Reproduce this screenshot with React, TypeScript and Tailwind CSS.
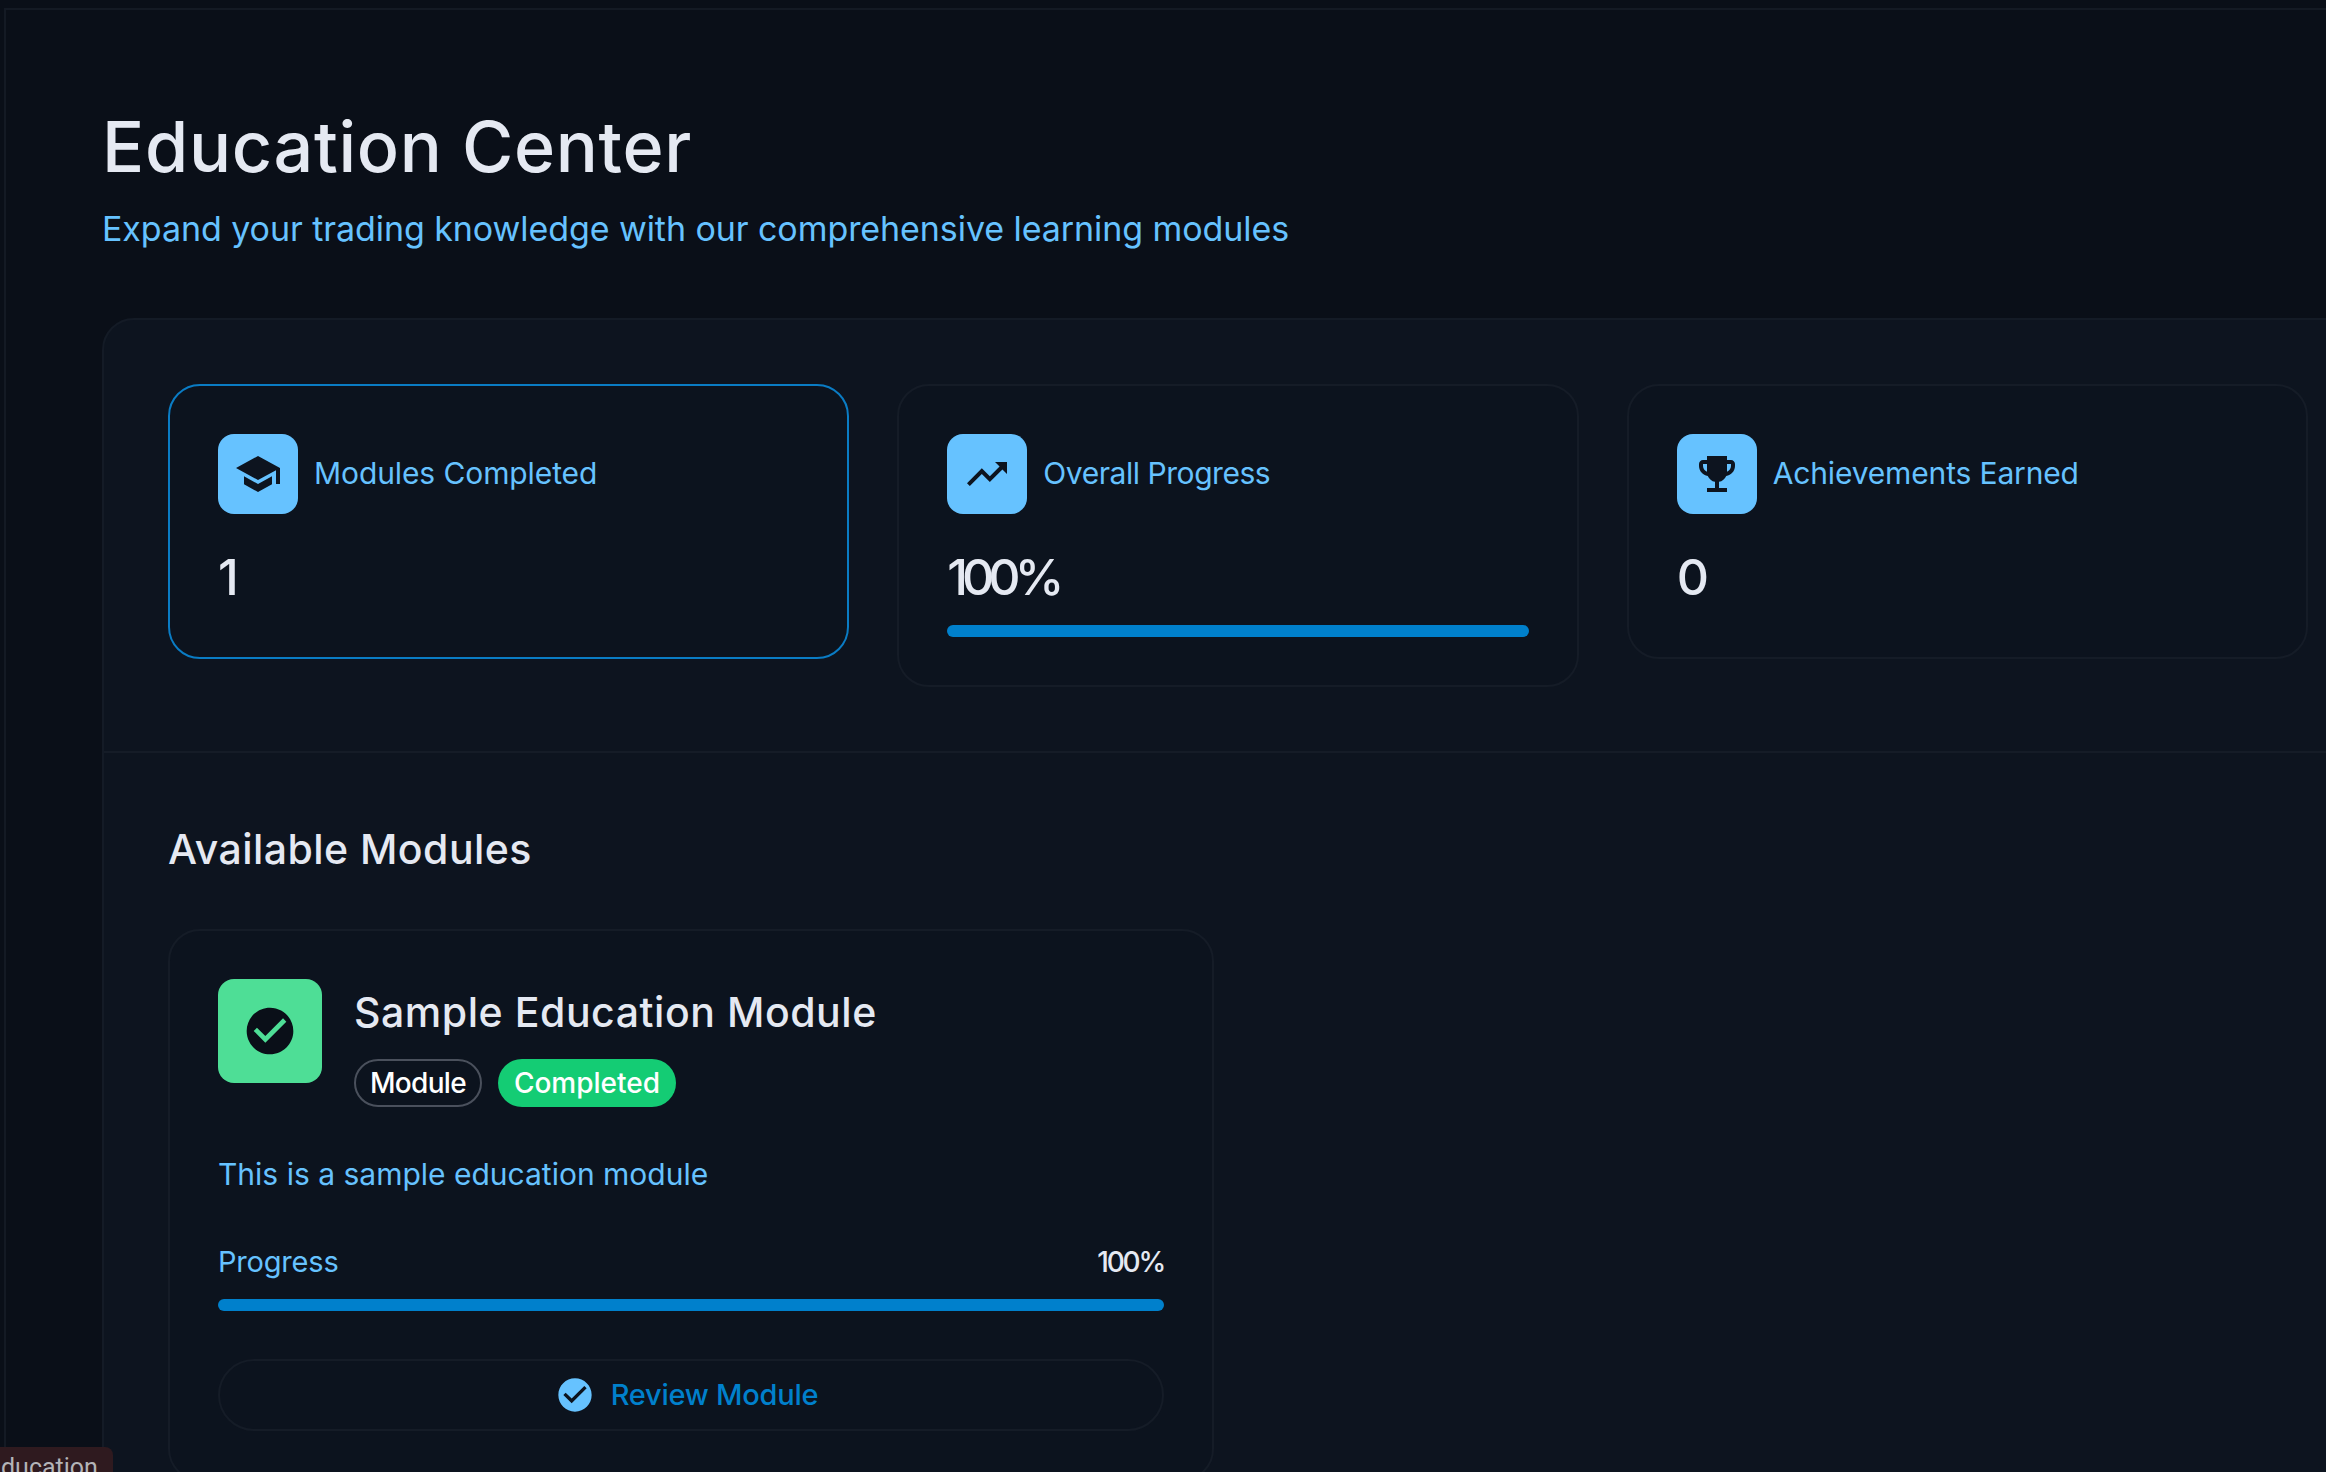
const paths = {
  school: "M5 13.18v4L12 21l7-3.82v-4L12 17l-7-3.82zM12 3 1 9l11 6 9-4.91V17h2V9L12 3z",
  trend: "M16 6l2.29 2.29-4.88 4.88-4-4L2 16.59 3.41 18l6-6 4 4 6.3-6.29L22 12V6h-6z",
  trophy: "M19 5h-2V3H7v2H5c-1.1 0-2 .9-2 2v1c0 2.55 1.92 4.63 4.39 4.94.63 1.5 1.98 2.63 3.61 2.96V19H7v2h10v-2h-4v-3.1c1.63-.33 2.98-1.46 3.61-2.96C19.08 12.63 21 10.55 21 8V7c0-1.1-.9-2-2-2zM5 8V7h2v3.82C5.84 10.4 5 9.3 5 8zm14 0c0 1.3-.84 2.4-2 2.82V7h2v1z",
  check: "M12 2C6.48 2 2 6.48 2 12s4.48 10 10 10 10-4.48 10-10S17.52 2 12 2zm-2 15-5-5 1.41-1.41L10 14.17l7.59-7.59L19 8l-9 9z",
};

function Icon({ d, className }: { d: string; className: string }) {
  return (
    <svg viewBox="0 0 24 24" className={className} fill="currentColor" aria-hidden="true">
      <path d={d} />
    </svg>
  );
}

function StatCard({
  icon,
  label,
  labelClass,
  value,
  valueClass,
  active,
  bar,
}: {
  icon: string;
  label: string;
  labelClass: string;
  value: string;
  valueClass: string;
  active?: boolean;
  bar?: boolean;
}) {
  return (
    <div
      className={`rounded-[32px] border-2 p-[48px] self-start bg-[#0c131e] ${
        active ? "border-[#0a7cc4]" : "border-[#151c27]"
      }`}
    >
      <div className="flex items-center gap-[16px]">
        <div className="w-[80px] h-[80px] rounded-[16px] bg-[#66c2ff] flex items-center justify-center text-[#0d141f]">
          <Icon d={icon} className="w-[48px] h-[48px]" />
        </div>
        <span className={`text-[30px] leading-[40px] relative top-[-1px] text-[#66c2ff] ${labelClass}`}>{label}</span>
      </div>
      <div className={`mt-[31px] text-[50px] leading-[64px] font-medium text-[#e5e9f2] ${valueClass}`}>{value}</div>
      {bar && <div className="h-[12px] mt-[16px] rounded-full bg-[#0080cc]" />}
    </div>
  );
}

export default function App() {
  return (
    <div className="relative w-full h-[1472px] overflow-hidden bg-[#0a0f18] font-['Inter',sans-serif]">
      <div className="h-[1472px] ml-[4px] mt-[8px] border-l-2 border-t-2 border-[#141a24] pl-[96px] pt-[95px]">
        <h1 className="text-[70px] leading-[84px] font-medium text-[#e5e9f2] tracking-[0.7px]">Education Center</h1>
        <p className="mt-[16px] text-[34px] leading-[48px] text-[#66c2ff] tracking-[-0.07px]">
          Expand your trading knowledge with our comprehensive learning modules
        </p>
        <div className="mt-[65px] w-[2272px] rounded-tl-[32px] border-2 border-[#141b26] bg-[#0d141f]">
          <div className="p-[64px] border-b-2 border-[#151c27] grid grid-cols-3 gap-[48px]">
            <StatCard icon={paths.school} label="Modules Completed" labelClass="tracking-[-0.1px]" value="1" valueClass="" active />
            <StatCard icon={paths.trend} label="Overall Progress" labelClass="tracking-[-0.45px]" value="100%" valueClass="tracking-[-6px]" bar />
            <StatCard icon={paths.trophy} label="Achievements Earned" labelClass="tracking-[-0.15px]" value="0" valueClass="" />
          </div>
          <div className="px-[64px] pt-[64px]">
            <h2 className="text-[41px] leading-[64px] font-medium text-[#e5e9f2] tracking-[0.45px]">Available Modules</h2>
            <div className="mt-[48px] grid grid-cols-2 gap-[48px]">
              <div className="rounded-[32px] border-2 border-[#151c27] bg-[#0c131e] p-[48px]">
                <div className="flex gap-[32px]">
                  <div className="w-[104px] h-[104px] rounded-[16px] bg-[#4ede96] flex items-center justify-center text-[#0a0f18]">
                    <Icon d={paths.check} className="w-[56px] h-[56px]" />
                  </div>
                  <div>
                    <div className="text-[41px] leading-[48px] font-medium text-[#e5e9f2] tracking-[0.55px] mt-[9px]">
                      Sample Education Module
                    </div>
                    <div className="flex gap-[16px] mt-[23px]">
                      <span className="h-[48px] px-[14px] rounded-full border-2 border-[#4a505c] text-white text-[28px] leading-[44px] font-medium tracking-[-0.7px]">Module</span>
                      <span className="h-[48px] px-[16px] rounded-full bg-[#14cc74] text-white text-[28px] leading-[48px] font-medium">Completed</span>
                    </div>
                  </div>
                </div>
                <p className="mt-[45px] text-[30px] leading-[44px] text-[#66c2ff]">This is a sample education module</p>
                <div className="mt-[44px] flex items-center justify-between">
                  <span className="text-[29px] leading-[44px] text-[#66c2ff] tracking-[-0.2px]">Progress</span>
                  <span className="text-[28px] leading-[44px] font-medium text-[#e5e9f2] tracking-[-2.2px]">100%</span>
                </div>
                <div className="h-[12px] mt-[15px] rounded-full bg-[#0080cc]" />
                <div className="mt-[48px] h-[72px] rounded-full border-2 border-[#151c27] flex items-center justify-center gap-[16px] pr-[9px]">
                  <Icon d={paths.check} className="w-[40px] h-[40px] text-[#66c2ff]" />
                  <span className="text-[29px] font-medium text-[#0080cc] tracking-[-0.25px]">Review Module</span>
                </div>
              </div>
            </div>
          </div>
        </div>
      </div>
      <div className="absolute left-0 top-[1447px] w-[113px] h-[40px] rounded-tr-[8px] bg-[#2f1a1f] overflow-hidden">
        <span className="block pl-[1px] pt-[3px] text-[25px] leading-[36px] text-[#b4b4b8] font-['Roboto',sans-serif]">ducation</span>
      </div>
    </div>
  );
}
